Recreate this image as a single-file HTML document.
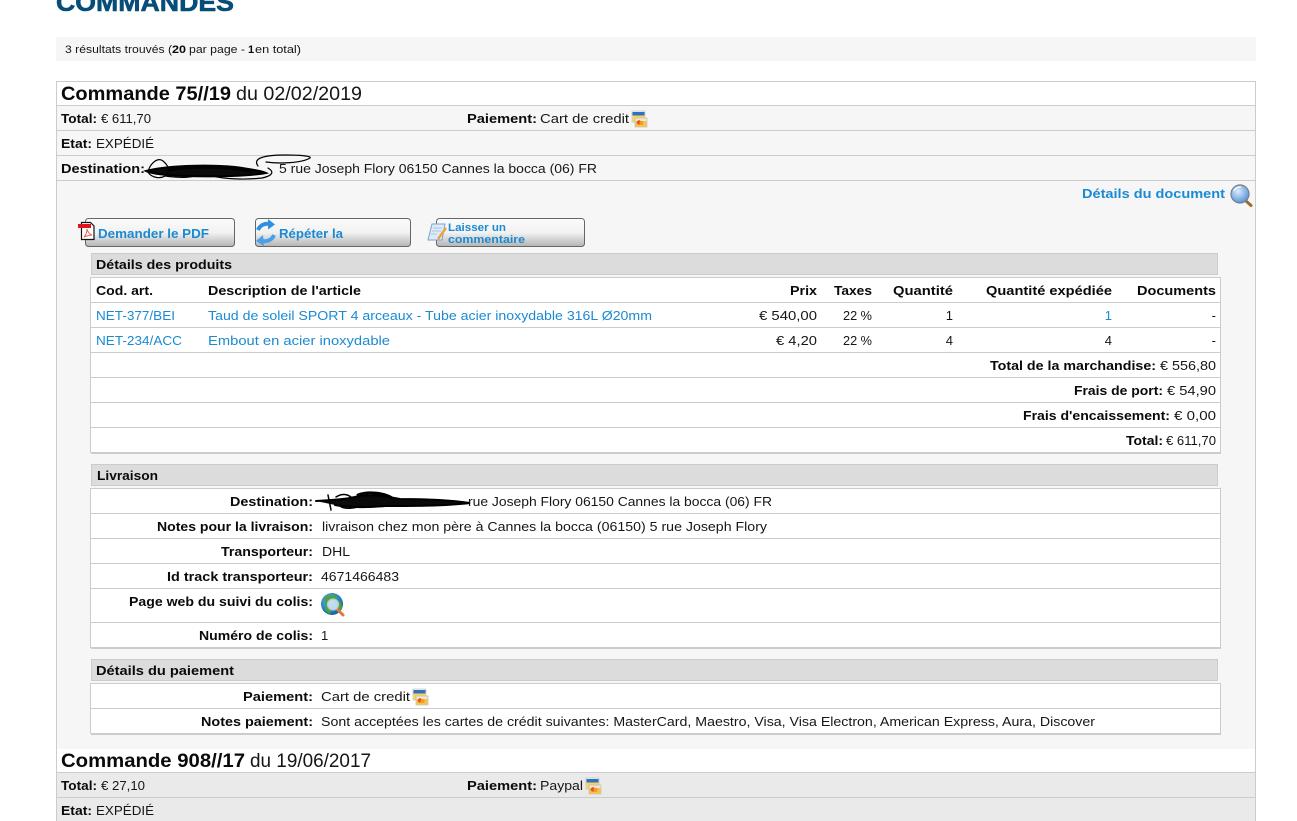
<!DOCTYPE html>
<html lang="fr"><head><meta charset="utf-8"><title>Commandes</title>
<style>
html,body{margin:0;padding:0;background:#fff;width:1297px;height:821px;overflow:hidden}
svg{display:block}
text{font-family:"Liberation Sans",sans-serif;font-size:13px;fill:#161616}
.b{font-weight:700;fill:#0a0a0a}
.l{fill:#1b8ad3}
.lb{fill:#1b8ad3;font-weight:700}
.h{font-size:19px}
</style></head><body>
<svg width="1297" height="821" viewBox="0 0 1297 821" xmlns="http://www.w3.org/2000/svg">
<defs>
<linearGradient id="btn" x1="0" y1="0" x2="0" y2="1"><stop offset="0" stop-color="#fbfbfb"/><stop offset=".5" stop-color="#f2f2f2"/><stop offset="1" stop-color="#b4b4b4"/></linearGradient>
<radialGradient id="lens" cx=".4" cy=".35" r=".7"><stop offset="0" stop-color="#dcecfa"/><stop offset="1" stop-color="#4f8fd4"/></radialGradient>
<radialGradient id="globe" cx=".4" cy=".35" r=".7"><stop offset="0" stop-color="#5fc0e8"/><stop offset="1" stop-color="#0d5f9c"/></radialGradient>
<g id="card">
<rect x="0" y="0" width="13" height="11" fill="#f4f4f4" stroke="#bbb" stroke-width=".6"/>
<rect x=".5" y="1" width="12" height="3.500" fill="#2f6fc4"/>
<rect x=".5" y="4.500" width="12" height="6" fill="#f7d65a"/>
<rect x="3" y="7" width="12" height="9" fill="#efe8d8" stroke="#bdb39f" stroke-width=".6"/>
<rect x="3.500" y="10" width="11" height="5.500" fill="#f8c24a"/>
<circle cx="7" cy="11.500" r="2.200" fill="#e5511f"/><circle cx="9.500" cy="12" r="2" fill="#f59a23"/>
</g>
</defs>

<rect width="1297" height="821" fill="#fff"/>
<text x="56" y="11" class="b" style="font-size:25px;fill:#064d78;stroke:#064d78;stroke-width:.6" textLength="178" lengthAdjust="spacingAndGlyphs">COMMANDES</text>

<rect x="56" y="37" width="1200" height="24" fill="#f6f6f6"/>
<text x="65" y="53" style="font-size:11px" textLength="107" lengthAdjust="spacingAndGlyphs">3 résultats trouvés (</text>
<text x="172" y="53" class="b" style="font-size:11px" textLength="14" lengthAdjust="spacingAndGlyphs">20</text>
<text x="189" y="53" style="font-size:11px" textLength="56" lengthAdjust="spacingAndGlyphs">par page -</text>
<text x="248" y="53" class="b" style="font-size:11px">1</text>
<text x="255" y="53" style="font-size:11px" textLength="46" lengthAdjust="spacingAndGlyphs">en total)</text>

<!-- outer panel -->
<rect x="56.500" y="81.500" width="1199" height="745" fill="#fff" stroke="#ccc"/>
<rect x="57" y="106" width="1198" height="643" fill="#f6f6f6"/>
<rect x="57" y="773" width="1198" height="48" fill="#eaeaea"/>
<g fill="#ccc">
<rect x="57" y="105" width="1198" height="1"/><rect x="57" y="130" width="1198" height="1"/>
<rect x="57" y="155" width="1198" height="1"/><rect x="57" y="180" width="1198" height="1"/>
<rect x="57" y="772" width="1198" height="1"/><rect x="57" y="797" width="1198" height="1"/>
</g>

<text x="61" y="100" class="b h" textLength="170" lengthAdjust="spacingAndGlyphs">Commande 75//19</text>
<text x="236" y="100" class="h" textLength="126" lengthAdjust="spacingAndGlyphs">du 02/02/2019</text>
<text x="61" y="123" class="b" textLength="36" lengthAdjust="spacingAndGlyphs">Total:</text>
<text x="101" y="123" textLength="50" lengthAdjust="spacingAndGlyphs">€ 611,70</text>
<text x="467" y="123" class="b" textLength="70" lengthAdjust="spacingAndGlyphs">Paiement:</text>
<text x="540" y="123" textLength="89" lengthAdjust="spacingAndGlyphs">Cart de credit</text>
<use href="#card" x="632" y="111"/>
<text x="61" y="148" class="b" textLength="31" lengthAdjust="spacingAndGlyphs">Etat:</text>
<text x="96" y="148" textLength="58" lengthAdjust="spacingAndGlyphs">EXPÉDIÉ</text>
<text x="61" y="173" class="b" textLength="84" lengthAdjust="spacingAndGlyphs">Destination:</text>
<text x="279" y="173" textLength="318" lengthAdjust="spacingAndGlyphs">5 rue Joseph Flory 06150 Cannes la bocca (06) FR</text>
<g fill="none" stroke="#000" stroke-linecap="round">
<path d="M146 171C165 166 205 164 235 167C250 169 262 171 266 173C250 176 215 177 185 176C165 175 152 174 146 171Z" fill="#0a0a0a" stroke-width="2"/>
<path d="M148 172C150 163 158 157 163 161C168 165 171 171 165 176C158 180 150 176 148 172Z" stroke-width="1.200"/>
<path d="M165 176C180 178 190 178 198 175M212 176C225 179 245 180 262 178C272 176 275 172 268 168" stroke-width="1.200"/>
<path d="M258 166C252 158 265 155 285 155C300 155 312 156 310 158C302 163 280 164 266 162" stroke-width="1.200"/>
<path d="M170 170C190 166 225 166 250 171" stroke-width="3"/>
</g>

<text x="1082" y="198" class="lb" textLength="143" lengthAdjust="spacingAndGlyphs">Détails du document</text>
<g>
<path d="M1246 201l5 4.500" stroke="#a06a25" stroke-width="3" stroke-linecap="round"/>
<circle cx="1240" cy="194" r="9" fill="url(#lens)" stroke="#6d7f93" stroke-width="1.200"/>
<path d="M1234 191c1-3 4-4 7-4" stroke="#fff" stroke-width="1.400" fill="none" opacity=".8"/>
</g>

<!-- buttons -->
<g fill="url(#btn)" stroke="#666">
<rect x="85.500" y="218.500" width="149" height="28" rx="3"/>
<rect x="255.500" y="218.500" width="155" height="28" rx="3"/>
<rect x="436.500" y="218.500" width="148" height="28" rx="3"/>
</g>
<g>
<path d="M81.500 222.500h9l3.500 3.500v13.500h-12.500z" fill="#fff" stroke="#111" stroke-width="1.200"/>
<rect x="78" y="224" width="13" height="4" fill="#e0141c"/>
<path d="M84 237c2-2 3-5 3-8 1 3 2 5 5 6-3 0-5 1-8 2z" fill="none" stroke="#e8604f" stroke-width="1"/>
</g>
<text x="98" y="238" class="lb" textLength="111" lengthAdjust="spacingAndGlyphs">Demander le PDF</text>
<g fill="none" stroke-linecap="butt">
<path d="M258 230c2-5 7-7 12-6" stroke="#2f8fe0" stroke-width="4"/>
<path d="M268 219l7 5.500-7 5z" fill="#2f8fe0"/>
<path d="M274 235c-2 5-7 7-12 6" stroke="#4a9fea" stroke-width="4"/>
<path d="M264 246l-8-5 7-6z" fill="#4a9fea"/>
</g>
<text x="279" y="238" class="lb" textLength="64" lengthAdjust="spacingAndGlyphs">Répéter la</text>
<g>
<path d="M432 224h13l-3 16h-14z" fill="#dfeaf7" stroke="#7aa2cf"/>
<path d="M433 228h9M432 231h9M431 234h6" stroke="#9ab8d8" stroke-width=".8"/>
<path d="M438 239l8-11" stroke="#e8a33a" stroke-width="2.400"/>
</g>
<text x="448" y="231" class="lb" style="font-size:11px" textLength="58" lengthAdjust="spacingAndGlyphs">Laisser un</text>
<text x="448" y="243" class="lb" style="font-size:11px" textLength="77" lengthAdjust="spacingAndGlyphs">commentaire</text>

<!-- section headers -->
<g fill="#dcdcdc" stroke="#ccc">
<rect x="91.500" y="253.500" width="1126" height="21"/>
<rect x="91.500" y="464.500" width="1126" height="21"/>
<rect x="91.500" y="659.500" width="1126" height="21"/>
</g>
<text x="96" y="269" class="b" textLength="136" lengthAdjust="spacingAndGlyphs">Détails des produits</text>
<text x="97" y="480" class="b" textLength="61" lengthAdjust="spacingAndGlyphs">Livraison</text>
<text x="96" y="675" class="b" textLength="138" lengthAdjust="spacingAndGlyphs">Détails du paiement</text>

<!-- tables -->
<g fill="#fff" stroke="#ccc">
<rect x="90.500" y="277.500" width="1130" height="175"/>
<rect x="90.500" y="488.500" width="1130" height="159"/>
<rect x="90.500" y="683.500" width="1130" height="50"/>
</g>
<g fill="#ccc">
<rect x="91" y="302" width="1129" height="1"/><rect x="91" y="327" width="1129" height="1"/>
<rect x="91" y="352" width="1129" height="1"/><rect x="91" y="377" width="1129" height="1"/>
<rect x="91" y="402" width="1129" height="1"/><rect x="91" y="427" width="1129" height="1"/>
<rect x="91" y="453" width="1130" height="1"/>
<rect x="91" y="513" width="1129" height="1"/><rect x="91" y="538" width="1129" height="1"/>
<rect x="91" y="563" width="1129" height="1"/><rect x="91" y="588" width="1129" height="1"/>
<rect x="91" y="622" width="1129" height="1"/><rect x="91" y="648" width="1130" height="1"/>
<rect x="91" y="708" width="1129" height="1"/><rect x="91" y="734" width="1130" height="1"/>
</g>

<!-- products -->
<text x="96" y="295" class="b" textLength="57" lengthAdjust="spacingAndGlyphs">Cod. art.</text>
<text x="208" y="295" class="b" textLength="153" lengthAdjust="spacingAndGlyphs">Description de l'article</text>
<text x="790" y="295" class="b" textLength="27" lengthAdjust="spacingAndGlyphs">Prix</text>
<text x="834" y="295" class="b" textLength="38" lengthAdjust="spacingAndGlyphs">Taxes</text>
<text x="893" y="295" class="b" textLength="60" lengthAdjust="spacingAndGlyphs">Quantité</text>
<text x="986" y="295" class="b" textLength="126" lengthAdjust="spacingAndGlyphs">Quantité expédiée</text>
<text x="1137" y="295" class="b" textLength="79" lengthAdjust="spacingAndGlyphs">Documents</text>

<text x="96" y="320" class="l" textLength="79" lengthAdjust="spacingAndGlyphs">NET-377/BEI</text>
<text x="208" y="320" class="l" textLength="444" lengthAdjust="spacingAndGlyphs">Taud de soleil SPORT 4 arceaux - Tube acier inoxydable 316L Ø20mm</text>
<text x="759" y="320" textLength="58" lengthAdjust="spacingAndGlyphs">€ 540,00</text>
<text x="843" y="320" textLength="29" lengthAdjust="spacingAndGlyphs">22 %</text>
<text x="953" y="320" text-anchor="end">1</text>
<text x="1112" y="320" text-anchor="end" class="l">1</text>
<text x="1216" y="320" text-anchor="end">-</text>

<text x="96" y="345" class="l" textLength="86" lengthAdjust="spacingAndGlyphs">NET-234/ACC</text>
<text x="208" y="345" class="l" textLength="182" lengthAdjust="spacingAndGlyphs">Embout en acier inoxydable</text>
<text x="776" y="345" textLength="41" lengthAdjust="spacingAndGlyphs">€ 4,20</text>
<text x="843" y="345" textLength="29" lengthAdjust="spacingAndGlyphs">22 %</text>
<text x="953" y="345" text-anchor="end">4</text>
<text x="1112" y="345" text-anchor="end">4</text>
<text x="1216" y="345" text-anchor="end">-</text>

<text x="990" y="370" class="b" textLength="166" lengthAdjust="spacingAndGlyphs">Total de la marchandise:</text>
<text x="1160" y="370" textLength="56" lengthAdjust="spacingAndGlyphs">€ 556,80</text>
<text x="1074" y="395" class="b" textLength="89" lengthAdjust="spacingAndGlyphs">Frais de port:</text>
<text x="1167" y="395" textLength="49" lengthAdjust="spacingAndGlyphs">€ 54,90</text>
<text x="1023" y="420" class="b" textLength="147" lengthAdjust="spacingAndGlyphs">Frais d'encaissement:</text>
<text x="1174" y="420" textLength="42" lengthAdjust="spacingAndGlyphs">€ 0,00</text>
<text x="1126" y="445" class="b" textLength="37" lengthAdjust="spacingAndGlyphs">Total:</text>
<text x="1166" y="445" textLength="50" lengthAdjust="spacingAndGlyphs">€ 611,70</text>

<!-- delivery -->
<text x="230" y="506" class="b" textLength="83" lengthAdjust="spacingAndGlyphs">Destination:</text>
<text x="468" y="506" textLength="304" lengthAdjust="spacingAndGlyphs">rue Joseph Flory 06150 Cannes la bocca (06) FR</text>
<g fill="none" stroke="#000" stroke-linecap="round">
<path d="M316 501C335 500 345 499 350 498C370 493 385 496 400 499C425 499 450 500 470 503C445 506 410 506 385 506C365 508 345 507 335 505" fill="#0a0a0a" stroke-width="2"/>
<path d="M328 495L331 510M336 497C342 493 348 494 352 498M340 506C345 510 355 508 360 506" stroke-width="1.500"/>
<path d="M358 495C368 491 384 493 392 498" stroke-width="3"/>
</g>
<text x="157" y="531" class="b" textLength="156" lengthAdjust="spacingAndGlyphs">Notes pour la livraison:</text>
<text x="322" y="531" textLength="445" lengthAdjust="spacingAndGlyphs">livraison chez mon père à Cannes la bocca (06150) 5 rue Joseph Flory</text>
<text x="221" y="556" class="b" textLength="92" lengthAdjust="spacingAndGlyphs">Transporteur:</text>
<text x="322" y="556" textLength="28" lengthAdjust="spacingAndGlyphs">DHL</text>
<text x="167" y="581" class="b" textLength="146" lengthAdjust="spacingAndGlyphs">Id track transporteur:</text>
<text x="321" y="581" textLength="78" lengthAdjust="spacingAndGlyphs">4671466483</text>
<text x="129" y="606" class="b" textLength="184" lengthAdjust="spacingAndGlyphs">Page web du suivi du colis:</text>
<g>
<circle cx="332" cy="604" r="11" fill="url(#globe)"/>
<path d="M324 598c4-3 9-4 13-2l-2 4-6 1-3 5zM325 607c3-1 5 0 6 3l-1 4c-3-1-5-4-5-7zM337 601l4 1 1 6-4 4-2-5z" fill="#4ea33c"/>
<path d="M337 609l6 6" stroke="#e8743a" stroke-width="3" stroke-linecap="round"/>
<circle cx="333" cy="604.500" r="5.500" fill="#d6e8f5" fill-opacity=".85" stroke="#b9c7d3" stroke-width="1.200"/>
</g>
<text x="199" y="640" class="b" textLength="114" lengthAdjust="spacingAndGlyphs">Numéro de colis:</text>
<text x="321" y="640">1</text>

<!-- payment -->
<text x="243" y="701" class="b" textLength="70" lengthAdjust="spacingAndGlyphs">Paiement:</text>
<text x="321" y="701" textLength="89" lengthAdjust="spacingAndGlyphs">Cart de credit</text>
<use href="#card" x="413" y="689"/>
<text x="201" y="726" class="b" textLength="112" lengthAdjust="spacingAndGlyphs">Notes paiement:</text>
<text x="321" y="726" textLength="774" lengthAdjust="spacingAndGlyphs">Sont acceptées les cartes de crédit suivantes: MasterCard, Maestro, Visa, Visa Electron, American Express, Aura, Discover</text>

<!-- order 2 -->
<text x="61" y="767" class="b h" textLength="184" lengthAdjust="spacingAndGlyphs">Commande 908//17</text>
<text x="250" y="767" class="h" textLength="121" lengthAdjust="spacingAndGlyphs">du 19/06/2017</text>
<text x="61" y="790" class="b" textLength="36" lengthAdjust="spacingAndGlyphs">Total:</text>
<text x="101" y="790" textLength="44" lengthAdjust="spacingAndGlyphs">€ 27,10</text>
<text x="467" y="790" class="b" textLength="70" lengthAdjust="spacingAndGlyphs">Paiement:</text>
<text x="540" y="790" textLength="43" lengthAdjust="spacingAndGlyphs">Paypal</text>
<use href="#card" x="586" y="778"/>
<text x="61" y="815" class="b" textLength="31" lengthAdjust="spacingAndGlyphs">Etat:</text>
<text x="96" y="815" textLength="58" lengthAdjust="spacingAndGlyphs">EXPÉDIÉ</text>
</svg>
</body></html>
